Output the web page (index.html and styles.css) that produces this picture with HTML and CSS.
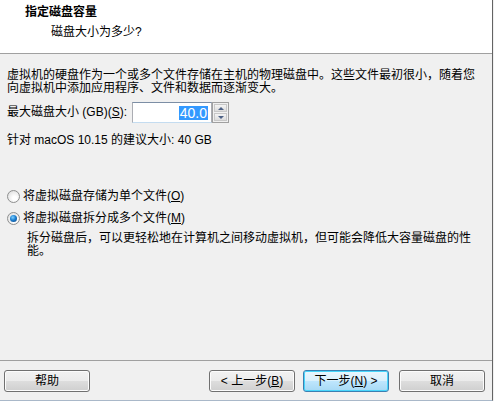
FILE: index.html
```html
<!DOCTYPE html>
<html>
  <head>
  <meta charset="utf-8">
  <title>新建虚拟机向导</title>
  <link rel="stylesheet" href="styles.css">
  </head>
  <body>
    <div class="wizard">
      <div class="cabecera">
        <div class="titulo">指定磁盘容量</div>
        <div class="subtitulo">磁盘大小为多少?</div>
      </div>

      <div class="contenido">
        <p class="texto">虚拟机的硬盘作为一个或多个文件存储在主机的物理磁盘中。这些文件最初很小，随着您<br>向虚拟机中添加应用程序、文件和数据而逐渐变大。</p>

        <div class="fila_tamano">
          <span>最大磁盘大小 (GB)(<u>S</u>):</span>
          <div class="spin">
            <div class="spin_valor"><span class="seleccion">40.0</span></div>
            <div class="spin_botones">
              <div class="spin_btn"><i class="flecha_arriba"></i></div>
              <div class="spin_btn"><i class="flecha_abajo"></i></div>
            </div>
          </div>
        </div>

        <p class="recomendado">针对 macOS 10.15 的建议大小: 40 GB</p>

        <div class="opciones">
          <label class="opcion"><span class="radio"></span>将虚拟磁盘存储为单个文件(<u>O</u>)</label>
          <label class="opcion"><span class="radio marcado"></span>将虚拟磁盘拆分成多个文件(<u>M</u>)</label>
          <p class="descripcion">拆分磁盘后，可以更轻松地在计算机之间移动虚拟机，但可能会降低大容量磁盘的性<br>能。</p>
        </div>
      </div>

      <div class="pie">
        <button class="boton">帮助</button>
        <button class="boton atras">&lt; 上一步(<u>B</u>)</button>
        <button class="boton defecto">下一步(<u>N</u>) &gt;</button>
        <button class="boton cancelar">取消</button>
      </div>
    </div>
  </body>
</html>
```

FILE: styles.css
```css
html, body { margin: 0; padding: 0; background-color: #f0f0f0; }

.wizard {
  width: 492px;
  height: 400px;
  border-right: 1px solid #646464;
  border-bottom: 1px solid #a9b8c9;
  background-color: #f0f0f0;
  display: flex;
  flex-direction: column;
  font-family: "Liberation Sans", "Noto Sans CJK SC", sans-serif;
  font-size: 12px;
  line-height: 13px;
  color: #000;
}

u { text-decoration: underline; text-underline-offset: 1px; }

/* cabecera blanca */
.cabecera {
  height: 47px;
  padding: 6px 0 0 25px;
  background-color: #ffffff;
  border-bottom: 1px solid #a0a0a0;
}
.titulo { font-weight: bold; }
.subtitulo { margin-top: 7px; padding-left: 26px; }

/* contenido */
.contenido {
  flex: 1;
  padding: 15px 7px 0 7px;
}
.texto { margin: 0; white-space: nowrap; }

.fila_tamano {
  display: flex;
  align-items: center;
  margin-top: 7px;
}
.spin {
  display: flex;
  margin-left: 5px;
  height: 21px;
}
.spin_valor {
  width: 80px;
  box-sizing: border-box;
  border: 1px solid #abadb3;
  border-top-color: #7c8ea5;
  border-bottom-color: #c4dcf0;
  background-color: #fff;
  display: flex;
  justify-content: flex-end;
  align-items: center;
  padding-right: 3px;
}
.seleccion {
  background-color: #3399ff;
  color: #fff;
  font-size: 14px;
  line-height: 14px;
  padding: 0 1px;
}
.spin_botones {
  width: 17px;
  box-sizing: border-box;
  border: 1px solid #a0a0a0;
  background-color: #f0f0f0;
  display: flex;
  flex-direction: column;
  padding: 1px;
  gap: 1px;
}
.spin_btn {
  flex: 1;
  background: linear-gradient(#f4f4f4, #dcdcdc);
  border: 1px solid #c8c8c8;
  display: flex;
  align-items: center;
  justify-content: center;
}
.flecha_arriba, .flecha_abajo {
  width: 0; height: 0;
  border-left: 3px solid transparent;
  border-right: 3px solid transparent;
}
.flecha_arriba { border-bottom: 3px solid #4d6185; }
.flecha_abajo { border-top: 3px solid #4d6185; }

.recomendado { margin: 11px 0 0 0; }

.opciones { margin-top: 39px; }
.opcion {
  display: flex;
  align-items: center;
  height: 20px;
  margin-bottom: 2px;
}
.radio {
  width: 11px;
  height: 11px;
  border-radius: 50%;
  border: 1px solid #8e8f8f;
  background: radial-gradient(circle at 60% 65%, #ffffff 20%, #dcdcdc 90%);
  margin: 0 3px 0 0;
  box-sizing: content-box;
  position: relative;
}
.radio.marcado::after {
  content: "";
  position: absolute;
  left: 2px; top: 2px;
  width: 7px; height: 7px;
  border-radius: 50%;
  background: radial-gradient(circle at 40% 35%, #7fd0ff 0%, #1c7fd0 45%, #0b3e7a 100%);
}
.descripcion { margin: 4px 0 0 20px; white-space: nowrap; }

/* botones inferiores */
.pie {
  border-top: 1px solid #a0a0a0;
  height: 40px;
  padding: 9px 7px 0 4px;
  box-sizing: border-box;
  display: flex;
  align-items: flex-start;
  gap: 8px;
}
.boton {
  width: 86px;
  height: 22px;
  padding: 0;
  border: 1px solid #707070;
  border-radius: 3px;
  background: linear-gradient(#f2f2f2 0%, #ebebeb 50%, #dddddd 51%, #cfcfcf 100%);
  box-shadow: inset 0 0 0 1px #fcfcfc;
  font-family: "Liberation Sans", "Noto Sans CJK SC", sans-serif;
  font-size: 12px;
  line-height: 13px;
  color: #000;
}
.atras { margin-left: auto; }
.defecto {
  border-color: #3c7fb1;
  background: linear-gradient(#eaf6fd 0%, #d9f0fc 50%, #bee6fd 51%, #a7d9f5 100%);
  box-shadow: inset 0 0 0 1px #48d6fb;
}
.cancelar { margin-left: 2px; }
```
